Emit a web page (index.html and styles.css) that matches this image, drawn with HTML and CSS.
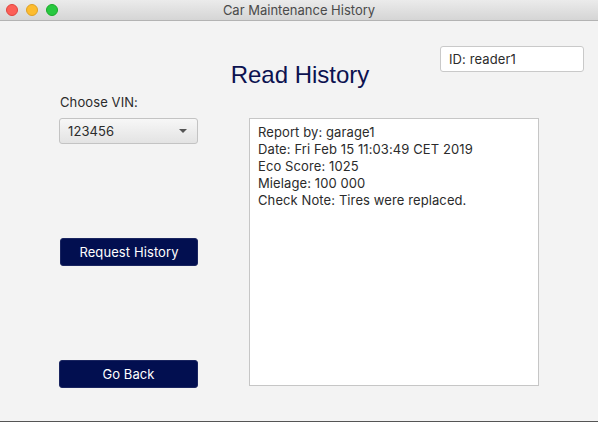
FILE: index.html
```html
<!DOCTYPE html>
<html>
<head>
<meta charset="utf-8">
<link rel="stylesheet" href="styles.css">
</head>
<body>
<div class="window">
  <div class="titlebar">
    <div class="lights">
      <span class="light red"></span>
      <span class="light yellow"></span>
      <span class="light green"></span>
    </div>
    <div class="win-title">Car Maintenance History</div>
  </div>
  <div class="content">
    <header class="header">
      <span></span>
      <h1 class="title">Read History</h1>
      <div class="id-box">ID: reader1</div>
    </header>
    <div class="main">
      <div class="left">
        <div class="label">Choose VIN:</div>
        <div class="combo"><span>123456</span><span class="arrow"></span></div>
        <button class="btn request">Request History</button>
        <button class="btn back">Go Back</button>
      </div>
      <div class="report">
        <div>Report by: garage1</div>
        <div>Date: Fri Feb 15 11:03:49 CET 2019</div>
        <div>Eco Score: 1025</div>
        <div>Mielage: 100 000</div>
        <div>Check Note: Tires were replaced.</div>
      </div>
    </div>
  </div>
</div>
</body>
</html>
```
FILE: styles.css
```css
* { box-sizing: border-box; }
html, body { margin: 0; padding: 0; }
body {
  width: 598px;
  height: 422px;
  overflow: hidden;
  font-family: Inter, "Liberation Sans", sans-serif;
  font-size: 13px;
  letter-spacing: 0.1px;
  color: #2b2b2b;
  background: #f2f2f2;
}
.window {
  width: 598px;
  height: 422px;
  display: flex;
  flex-direction: column;
  background: #f3f3f3;
  border-bottom: 1px solid #555;
}
.titlebar {
  height: 21px;
  flex: none;
  position: relative;
  display: flex;
  align-items: center;
  justify-content: center;
  background: linear-gradient(#ebebeb, #d5d5d5);
  border-bottom: 1px solid #b3b3b3;
}
.lights {
  position: absolute;
  left: 6px;
  top: 4px;
  display: flex;
  gap: 8px;
}
.light {
  width: 12px;
  height: 12px;
  border-radius: 50%;
  display: block;
}
.red { background: #fc5f57; border: 0.5px solid #e0443e; }
.yellow { background: #fdbc2e; border: 0.5px solid #dea123; }
.green { background: #28c840; border: 0.5px solid #1aab29; }
.win-title {
  font-size: 13px;
  letter-spacing: 0;
  color: #4a4a4a;
  line-height: 20px;
}
.content {
  flex: 1;
  display: flex;
  flex-direction: column;
}
.header {
  display: grid;
  grid-template-columns: 1fr auto 1fr;
  padding: 25px 14px 0 16px;
  align-items: start;
}
.title {
  margin: 15px 0 0;
  font-family: "Liberation Sans", Arial, sans-serif;
  font-weight: normal;
  font-size: 24px;
  letter-spacing: 0;
  line-height: 28px;
  color: #0c1250;
}
.id-box {
  justify-self: end;
  width: 144px;
  height: 26px;
  background: #fff;
  border: 1px solid #c9c9c9;
  border-radius: 3px;
  padding: 0 8px;
  line-height: 24px;
  color: #2b2b2b;
}
.main {
  display: flex;
  padding-left: 59px;
}
.left {
  width: 139px;
  display: flex;
  flex-direction: column;
  align-items: stretch;
}
.label {
  margin-top: 5px;
  line-height: 16px;
  padding-left: 1px;
}
.combo {
  margin-top: 8px;
  height: 26px;
  border: 1px solid #c3c3c3;
  border-radius: 3px;
  background: linear-gradient(#f7f7f7, #e3e3e3);
  display: flex;
  align-items: center;
  justify-content: space-between;
  padding: 0 10px 0 8px;
  color: #2b2b2b;
}
.arrow {
  width: 0;
  height: 0;
  border-left: 4px solid transparent;
  border-right: 4px solid transparent;
  border-top: 4px solid #555;
}
.btn {
  font-family: Inter, "Liberation Sans", sans-serif;
  font-size: 13px;
  letter-spacing: 0.1px;
  color: #fff;
  background: #020f50;
  border: 1px solid #1a2560;
  border-radius: 3px;
  height: 28px;
  padding: 0;
}
.request { margin-top: 94px; margin-left: 1px; }
.back { margin-top: 94px; }
.report {
  margin-left: 51px;
  margin-top: 29px;
  width: 290px;
  height: 268px;
  background: #fff;
  border: 1px solid #c6c6c6;
  padding: 5px 8px;
  line-height: 17px;
  color: #2b2b2b;
}
```
